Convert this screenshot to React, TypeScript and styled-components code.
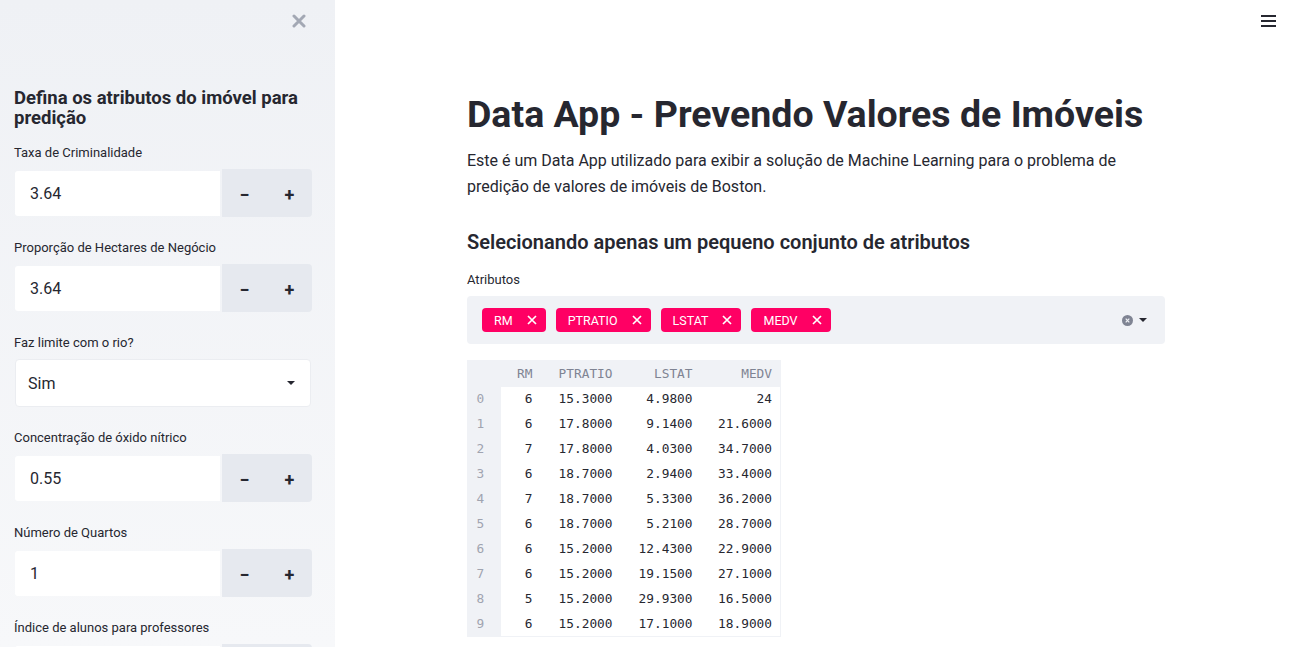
import styled, { createGlobalStyle } from "styled-components";

const GlobalStyle = createGlobalStyle`
  html, body {
    margin: 0;
    padding: 0;
    background: #ffffff;
  }
  body {
    font-family: Roboto, "Noto Sans", sans-serif;
    color: #262730;
  }
  * {
    box-sizing: border-box;
  }
`;

const Page = styled.div`
  display: flex;
  width: 100vw;
  height: 100vh;
  overflow: hidden;
`;

const Sidebar = styled.aside`
  position: relative;
  flex: 0 0 335px;
  height: 100%;
  overflow: hidden;
  background-image: linear-gradient(180deg, #eff1f5 0%, #f7f8fa 100%);
  padding: 88px 23px 0 14px;
`;

const CloseButton = styled.button`
  position: absolute;
  top: 11px;
  right: 26px;
  width: 20px;
  height: 20px;
  padding: 0;
  border: none;
  background: none;
  color: #a3a8b4;
  display: flex;
  align-items: center;
  justify-content: center;
`;

const SideTitle = styled.h2`
  margin: 0 0 17px;
  font-size: 18.5px;
  line-height: 20px;
  font-weight: 700;
  color: #262730;
`;

const Field = styled.div`
  margin-bottom: 23px;
`;

const Label = styled.div`
  font-size: 13px;
  line-height: 16px;
  color: #262730;
  margin-bottom: 8px;
`;

const NumberRow = styled.div`
  display: flex;
  height: 48px;
  padding-left: 1px;
`;

const NumberInput = styled.div`
  flex: 1;
  margin: 2px 2px 1px 0;
  background: #ffffff;
  border-radius: 3px 0 0 3px;
  display: flex;
  align-items: center;
  padding-left: 15px;
  font-size: 16px;
  color: #262730;
`;

const StepGroup = styled.div`
  flex: 0 0 90px;
  display: flex;
  background: #e6e9ef;
  border-radius: 0 4px 4px 0;
`;

const StepButton = styled.div`
  flex: 1;
  display: flex;
  align-items: center;
  justify-content: center;
  font-size: 18px;
  font-weight: 700;
  color: #262730;
  padding-top: 2px;
`;

const SelectBox = styled.div`
  height: 48px;
  margin: 0 1px 0 1px;
  background: #ffffff;
  border: 1px solid #ebedf1;
  border-radius: 4px;
  display: flex;
  align-items: center;
  justify-content: space-between;
  padding: 0 15px 0 12px;
  font-size: 16px;
`;

const Caret = styled.span`
  width: 0;
  height: 0;
  border-left: 4px solid transparent;
  border-right: 4px solid transparent;
  border-top: 4px solid #262730;
`;

const Main = styled.main`
  flex: 1;
  position: relative;
  height: 100%;
  overflow: hidden;
`;

const MenuButton = styled.div`
  position: absolute;
  top: 15px;
  right: 15px;
  width: 15px;
  display: flex;
  flex-direction: column;
  gap: 3px;
  span {
    display: block;
    height: 2px;
    background: #262730;
  }
`;

const Content = styled.div`
  width: 698px;
  margin-left: 132px;
  padding-top: 88px;
`;

const Title = styled.h1`
  margin: 0 0 8px;
  font-size: 37.5px;
  line-height: 52px;
  font-weight: 700;
  color: #262730;
  white-space: nowrap;
`;

const Paragraph = styled.p`
  margin: 0 0 28px;
  font-size: 16px;
  line-height: 26px;
  color: #262730;
`;

const SubTitle = styled.h3`
  margin: 0 0 16px;
  font-size: 20px;
  line-height: 28px;
  font-weight: 600;
  color: #262730;
`;

const MultiLabel = styled.div`
  font-size: 13px;
  line-height: 16px;
  color: #262730;
  margin-bottom: 8px;
`;

const MultiBox = styled.div`
  height: 48px;
  background: #f0f2f6;
  border-radius: 4px;
  display: flex;
  align-items: center;
  padding: 0 18px 0 15px;
  margin-bottom: 16px;
`;

const Tags = styled.div`
  flex: 1;
  display: flex;
  gap: 10px;
`;

const Tag = styled.span`
  height: 24px;
  background: #ff0064;
  border-radius: 4px;
  color: #ffffff;
  font-size: 12.5px;
  display: inline-flex;
  align-items: center;
  gap: 14px;
  padding: 0 9px 0 12px;
  svg {
    display: block;
  }
`;

const MultiIcons = styled.div`
  display: flex;
  align-items: center;
  gap: 6px;
`;

const Table = styled.table`
  border-collapse: collapse;
  border: 1px solid #f0f2f6;
  font-family: "DejaVu Sans Mono", "Liberation Mono", monospace;
  font-size: 12.8px;
  color: #262730;
`;

const HeadCell = styled.th<{ $width: number }>`
  width: ${(p) => p.$width}px;
  height: 26px;
  padding: 0 8px 1px 0;
  text-align: right;
  font-weight: 400;
  color: #7f8493;
  background: #f0f2f6;
`;

const IndexCell = styled.td`
  height: 25px;
  padding: 0 8px 1px 0;
  text-align: center;
  color: #a0a4b0;
  background: #f0f2f6;
`;

const Cell = styled.td`
  height: 25px;
  padding: 0 8px 1px 0;
  text-align: right;
`;

const numberFields = [
  { label: "Taxa de Criminalidade", value: "3.64" },
  { label: "Proporção de Hectares de Negócio", value: "3.64" },
];

const moreFields = [
  { label: "Concentração de óxido nítrico", value: "0.55" },
  { label: "Número de Quartos", value: "1" },
  { label: "Índice de alunos para professores", value: "15" },
];

const tags = ["RM", "PTRATIO", "LSTAT", "MEDV"];

const rows = [
  ["6", "15.3000", "4.9800", "24"],
  ["6", "17.8000", "9.1400", "21.6000"],
  ["7", "17.8000", "4.0300", "34.7000"],
  ["6", "18.7000", "2.9400", "33.4000"],
  ["7", "18.7000", "5.3300", "36.2000"],
  ["6", "18.7000", "5.2100", "28.7000"],
  ["6", "15.2000", "12.4300", "22.9000"],
  ["6", "15.2000", "19.1500", "27.1000"],
  ["5", "15.2000", "29.9300", "16.5000"],
  ["6", "15.2000", "17.1000", "18.9000"],
];

function NumberField({ label, value }: { label: string; value: string }) {
  return (
    <Field>
      <Label>{label}</Label>
      <NumberRow>
        <NumberInput>{value}</NumberInput>
        <StepGroup>
          <StepButton>−</StepButton>
          <StepButton>+</StepButton>
        </StepGroup>
      </NumberRow>
    </Field>
  );
}

export default function App() {
  return (
    <>
      <GlobalStyle />
      <Page>
        <Sidebar>
          <CloseButton>
            <svg width="14" height="14" viewBox="0 0 14 14">
              <path d="M2 2L12 12M12 2L2 12" stroke="currentColor" strokeWidth="3" strokeLinecap="round" />
            </svg>
          </CloseButton>
          <SideTitle>Defina os atributos do imóvel para predição</SideTitle>
          {numberFields.map((f) => (
            <NumberField key={f.label} label={f.label} value={f.value} />
          ))}
          <Field>
            <Label>Faz limite com o rio?</Label>
            <SelectBox>
              Sim
              <Caret />
            </SelectBox>
          </Field>
          {moreFields.map((f) => (
            <NumberField key={f.label} label={f.label} value={f.value} />
          ))}
        </Sidebar>
        <Main>
          <MenuButton>
            <span />
            <span />
            <span />
          </MenuButton>
          <Content>
            <Title>Data App - Prevendo Valores de Imóveis</Title>
            <Paragraph>
              Este é um Data App utilizado para exibir a solução de Machine Learning para o problema de
              predição de valores de imóveis de Boston.
            </Paragraph>
            <SubTitle>Selecionando apenas um pequeno conjunto de atributos</SubTitle>
            <MultiLabel>Atributos</MultiLabel>
            <MultiBox>
              <Tags>
                {tags.map((t) => (
                  <Tag key={t}>
                    {t}
                    <svg width="10" height="10" viewBox="0 0 10 10">
                      <path d="M1 1L9 9M9 1L1 9" stroke="#ffffff" strokeWidth="1.7" />
                    </svg>
                  </Tag>
                ))}
              </Tags>
              <MultiIcons>
                <svg width="11" height="11" viewBox="0 0 11 11">
                  <circle cx="5.5" cy="5.5" r="5.5" fill="#7f8493" />
                  <path d="M3.7 3.7L7.3 7.3M7.3 3.7L3.7 7.3" stroke="#f0f2f6" strokeWidth="1.2" />
                </svg>
                <Caret />
              </MultiIcons>
            </MultiBox>
            <Table>
              <thead>
                <tr>
                  <HeadCell $width={33} />
                  <HeadCell $width={40}>RM</HeadCell>
                  <HeadCell $width={80}>PTRATIO</HeadCell>
                  <HeadCell $width={80}>LSTAT</HeadCell>
                  <HeadCell $width={80}>MEDV</HeadCell>
                </tr>
              </thead>
              <tbody>
                {rows.map((r, i) => (
                  <tr key={i}>
                    <IndexCell>{i}</IndexCell>
                    {r.map((v, j) => (
                      <Cell key={j}>{v}</Cell>
                    ))}
                  </tr>
                ))}
              </tbody>
            </Table>
          </Content>
        </Main>
      </Page>
    </>
  );
}
